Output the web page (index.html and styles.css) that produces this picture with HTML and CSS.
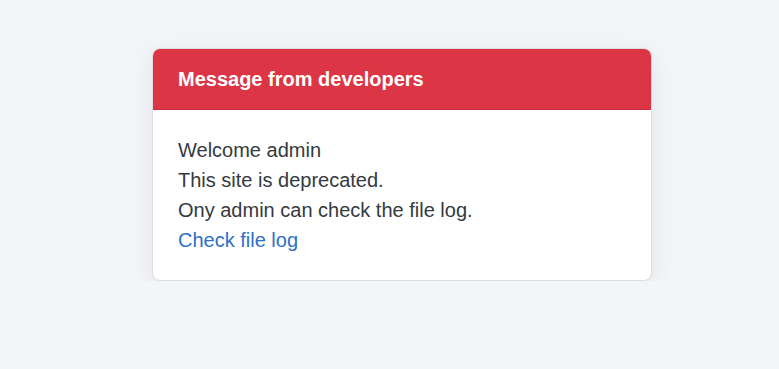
FILE: index.html
```html
<!DOCTYPE html>
<html>
<head>
    <title>Message</title>
    <link rel="stylesheet" href="styles.css">
</head>
<body>
    <div class="card">
        <div class="card-header">Message from developers</div>
        <div class="card-body">
            <p>Welcome admin</p>
            <p>This site is deprecated.</p>
            <p>Ony admin can check the file log.</p>
            <a href="#" class="card-link">Check file log</a>
        </div>
    </div>
</body>
</html>
```

FILE: styles.css
```css
body {
    background-color: #f4f5f9;
    color: #343a40;
    font-family: "Liberation Sans", Arial, sans-serif;
    font-size: 20px;
    line-height: 1.5;
    margin: 0;
    padding: 48px 0 0 152px;
}
.card {
    width: 500px;
    box-sizing: border-box;
    background: #fff;
    border: 1px solid #dcdde2;
    border-radius: 8px;
    overflow: hidden;
    box-shadow: 0 6px 24px rgba(0,0,0,0.08);
}
.card-header {
    background: #dc3545;
    color: #fff;
    font-weight: bold;
    line-height: 24px;
    padding: 18px 24px 18px 25px;
    border-bottom: 1px solid #c82f3e;
}
.card-body {
    padding: 25px 24px 25px 25px;
}
.card-body p {
    margin: 0;
}
.card-link {
    color: #2f6fc6;
    text-decoration: none;
}
```
